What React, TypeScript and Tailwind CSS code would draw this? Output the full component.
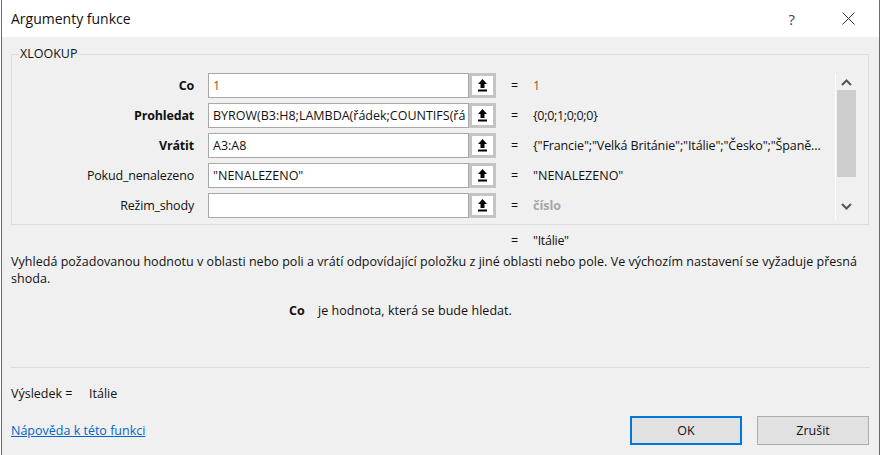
const FONT = "font-['Open_Sans','Noto_Sans',sans-serif]";

function RefIcon() {
  return (
    <svg width="11" height="13" viewBox="0 0 11 13" fill="#000">
      <path d="M5.5 0 L10 5 H7.5 V9 H3.5 V5 H1 Z" />
      <rect x="1" y="10.5" width="9" height="2" />
    </svg>
  );
}

function Row({ label, bold, value, result, resultClass, valueClass }: { label: string; bold?: boolean; value: string; result: string; resultClass?: string; valueClass?: string }) {
  return (
    <div className="flex h-[25px] items-center">
      <div className={`w-[182px] text-right ${bold ? "font-bold" : ""} tracking-[-0.18px]`}>{label}</div>
      <div className="ml-[14px] flex h-[25px] w-[261px] items-center overflow-hidden whitespace-nowrap border border-[#a8a8a8] bg-white px-1">
        <span className={valueClass ?? ""}>{value}</span>
      </div>
      <div className="flex h-[25px] w-[27px] items-center justify-center border-[3px] border-[#c4c4c4] bg-white">
        <RefIcon />
      </div>
      <div className="ml-[15px] w-[22px]">=</div>
      <div className={`whitespace-nowrap ${resultClass ?? ""}`}>{result}</div>
    </div>
  );
}

export default function App() {
  return (
    <div className={`${FONT} flex h-[455px] w-[881px] flex-col overflow-hidden bg-white px-px text-[12.5px] leading-4 text-[#111]`}>
      <div className="flex h-full flex-col border-x border-[#6b6b6b] bg-[#f0f0f0]">
        <header className="flex h-[37px] shrink-0 items-center justify-between bg-white pl-[9px] pr-[24px]">
          <span className="text-[14px]">Argumenty funkce</span>
          <div className="flex items-center gap-[47px]">
            <span className="text-[15px] text-[#444]">?</span>
            <svg width="13" height="13" viewBox="0 0 13 13" stroke="#333" fill="none"><path d="M.5 .5 L12.5 12.5 M12.5 .5 L.5 12.5" /></svg>
          </div>
        </header>

        <div className="flex flex-1 flex-col pl-[9px] pr-[10px]">
          <fieldset className="relative mt-[10px] flex h-[178px] border border-[#dcdcdc]">
            <legend className="ml-[7px] px-[1px] text-[12.5px] leading-[14px]">XLOOKUP</legend>
            <div className="mt-[12px] flex flex-col gap-[5px]">
              <Row label="Co" bold value="1" valueClass="text-[#8a5a1c]" result="1" resultClass="text-[#8a5a1c]" />
              <Row label="Prohledat" bold value="BYROW(B3:H8;LAMBDA(řádek;COUNTIFS(řá" result="{0;0;1;0;0;0}" resultClass="tracking-[-0.32px]" />
              <Row label="Vrátit" bold value="A3:A8" result={'{"Francie";"Velká Británie";"Itálie";"Česko";"Španě...'} resultClass="tracking-[-0.12px]" />
              <Row label="Pokud_nenalezeno" value={'"NENALEZENO"'} result={'"NENALEZENO"'} />
              <Row label="Režim_shody" value="" result="číslo" resultClass="font-bold text-[#a6a6a6]" />
            </div>
            <div className="absolute left-[823px] top-[13px] flex h-[146px] w-[21px] flex-col items-center border-l border-white">
              <svg className="mt-[5px]" width="11" height="7" viewBox="0 0 11 7" fill="none" stroke="#555" strokeWidth="2"><path d="M1 6 L5.5 1.5 L10 6" /></svg>
              <div className="mt-[4px] h-[87px] w-[19px] bg-[#cdcdcd]" />
              <svg className="mt-[26px]" width="11" height="7" viewBox="0 0 11 7" fill="none" stroke="#555" strokeWidth="2"><path d="M1 1 L5.5 5.5 L10 1" /></svg>
            </div>
          </fieldset>

          <div className="mt-[8px] flex h-4 pl-[500px]">
            <span className="w-[22px]">=</span>
            <span className="tracking-[-0.3px]">"Itálie"</span>
          </div>

          <p className="mt-[4px] w-[859px] leading-[17px] tracking-[0.03px]">
            Vyhledá požadovanou hodnotu v oblasti nebo poli a vrátí odpovídající položku z jiné oblasti nebo pole. Ve výchozím nastavení se vyžaduje přesná shoda.
          </p>

          <div className="mt-[16px] flex h-4 pl-[278px]">
            <span className="w-[29px] font-bold">Co</span>
            <span className="tracking-[0.05px]">je hodnota, která se bude hledat.</span>
          </div>

          <div className="mt-[48px] h-px w-[859px] bg-[#dcdcdc]" />

          <div className="mt-[18px] flex h-4">
            <span className="w-[78px]">Výsledek =</span>
            <span>Itálie</span>
          </div>

          <div className="mt-[14px] flex items-start justify-between">
            <a className="mt-[7px] text-[#0066cc] underline">Nápověda k této funkci</a>
            <div className="flex gap-[15px]">
              <button className="h-[29px] w-[112px] border-2 border-[#0078d7] bg-[#e1e1e1]">OK</button>
              <button className="h-[29px] w-[112px] border border-[#adadad] bg-[#e1e1e1]">Zrušit</button>
            </div>
          </div>
        </div>
      </div>
    </div>
  );
}
